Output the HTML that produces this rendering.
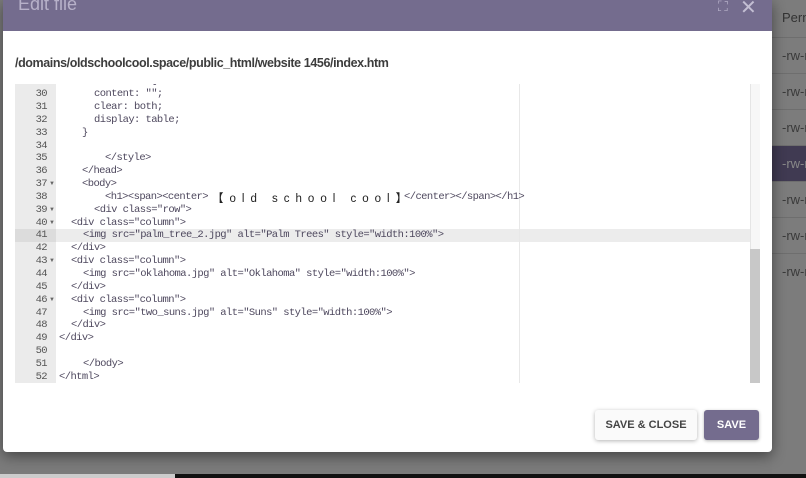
<!DOCTYPE html>
<html><head><meta charset="utf-8"><style>
*{margin:0;padding:0;box-sizing:border-box}
body{width:806px;height:478px;overflow:hidden;background:#7b7b7b;font-family:"Liberation Sans",sans-serif;position:relative}
.right{position:absolute;left:772px;top:0;width:34px;height:474px;background:#7c7c7c}
.row{position:absolute;left:0;width:34px;height:36px;border-top:1px solid #6e6e6e;color:#3a3a3a;font-size:13px;padding-left:10px;line-height:36px;white-space:nowrap;overflow:hidden}
.modal{position:absolute;left:3px;top:0;width:769px;height:452px;background:#fff;border-radius:0 0 4px 4px;box-shadow:0 4px 14px rgba(0,0,0,.45);overflow:hidden}
.hdr{position:absolute;left:0;top:0;width:769px;height:31px;background:#746c8e}
.hdr .t{position:absolute;left:15px;top:-6px;font-size:18px;color:#b7b1c9}
.path{position:absolute;left:12px;top:56px;font-size:12.5px;font-weight:bold;color:#3d3d3d;letter-spacing:-0.4px}
.ed{position:absolute;left:12px;top:84px;width:745px;height:299px;overflow:hidden;background:#fff}
.gut{position:absolute;left:0;top:0;width:41px;height:300px;background:#ebebeb}
.ln{position:absolute;left:0;width:32px;text-align:right;font:10.5px "Liberation Mono",monospace;letter-spacing:-0.6px;color:#555;height:13px;line-height:13px}
.ar{position:absolute;left:34px;font-size:6px;color:#666;line-height:13px}
.cl{position:absolute;font:10.5px "Liberation Mono",monospace;letter-spacing:-0.58px;color:#4e485e;white-space:pre;line-height:13px;height:13px}
.act{position:absolute;left:0;top:145px;width:738px;height:13px;background:#ececec}
.actg{position:absolute;left:0;top:145px;width:41px;height:13px;background:#dcdcdc}
.pm{position:absolute;left:504px;top:0;width:1px;height:300px;background:#e8e8e8}
.sb{position:absolute;left:735px;top:0;width:10px;height:300px;background:#f7f7f7;border-left:1px solid #e5e5e5}
.th{position:absolute;left:735px;top:165px;width:10px;height:134px;background:#c8c8c8}
.btn{position:absolute;top:410px;height:30px;border-radius:3px;font-size:11px;font-weight:bold;line-height:30px;text-align:center}
</style></head><body>
<div class="right">
<div style="position:absolute;left:10px;top:10px;font-size:13px;color:#333">Perm</div>
<div class="row" style="top:37px">-rw-r</div>
<div class="row" style="top:73px">-rw-r</div>
<div class="row" style="top:109px">-rw-r</div>
<div class="row" style="top:145px;background:#403a52;color:#888">-rw-r</div>
<div class="row" style="top:181px">-rw-r</div>
<div class="row" style="top:217px">-rw-r</div>
<div class="row" style="top:253px">-rw-r</div>
</div>
<div style="position:absolute;left:0;top:474px;width:806px;height:4px;background:#111"></div>
<div style="position:absolute;left:0;top:474px;width:175px;height:4px;background:#ccc"></div>
<div class="modal">
<div class="hdr"><div class="t">Edit file</div>
<div style="position:absolute;left:715px;top:-2px;color:#b7b1c9;font-size:14px">⛶</div>
<div style="position:absolute;left:737px;top:-5px;color:#c3bed3;font-size:20px">✕</div></div>
<div class="path">/domains/oldschoolcool.space/public_html/website 1456/index.htm</div>
<div class="ed">
<div class="gut"></div><div class="act"></div><div class="actg"></div><div class="pm"></div>
<div class="ln" style="top:-9px">29</div><div class="cl" style="top:-9px;left:67px">.row::after {</div>
<div class="ln" style="top:4px">30</div><div class="cl" style="top:4px;left:79px">content: "";</div>
<div class="ln" style="top:17px">31</div><div class="cl" style="top:17px;left:79px">clear: both;</div>
<div class="ln" style="top:30px">32</div><div class="cl" style="top:30px;left:79px">display: table;</div>
<div class="ln" style="top:43px">33</div><div class="cl" style="top:43px;left:67px">}</div>
<div class="ln" style="top:56px">34</div>
<div class="ln" style="top:68px">35</div><div class="cl" style="top:68px;left:90px">&lt;/style&gt;</div>
<div class="ln" style="top:81px">36</div><div class="cl" style="top:81px;left:67px">&lt;/head&gt;</div>
<div class="ln" style="top:94px">37</div><div class="ar" style="top:94px">▼</div><div class="cl" style="top:94px;left:67px">&lt;body&gt;</div>
<div class="ln" style="top:107px">38</div><div class="cl" style="top:107px;left:90px">&lt;h1&gt;&lt;span&gt;&lt;center&gt;</div>
<div class="cl" style="top:106px;left:197px;font:11.5px 'Liberation Sans','Noto Sans CJK JP',sans-serif;color:#222;letter-spacing:6px">【old school cool】</div>
<div class="cl" style="top:107px;left:389px">&lt;/center&gt;&lt;/span&gt;&lt;/h1&gt;</div>
<div class="ln" style="top:120px">39</div><div class="ar" style="top:120px">▼</div><div class="cl" style="top:120px;left:79px">&lt;div class="row"&gt;</div>
<div class="ln" style="top:133px">40</div><div class="ar" style="top:133px">▼</div><div class="cl" style="top:133px;left:56px">&lt;div class="column"&gt;</div>
<div class="ln" style="top:145px">41</div><div class="cl" style="top:145px;left:68px">&lt;img src="palm_tree_2.jpg" alt="Palm Trees" style="width:100%"&gt;</div>
<div class="ln" style="top:158px">42</div><div class="cl" style="top:158px;left:56px">&lt;/div&gt;</div>
<div class="ln" style="top:171px">43</div><div class="ar" style="top:171px">▼</div><div class="cl" style="top:171px;left:56px">&lt;div class="column"&gt;</div>
<div class="ln" style="top:184px">44</div><div class="cl" style="top:184px;left:68px">&lt;img src="oklahoma.jpg" alt="Oklahoma" style="width:100%"&gt;</div>
<div class="ln" style="top:197px">45</div><div class="cl" style="top:197px;left:56px">&lt;/div&gt;</div>
<div class="ln" style="top:210px">46</div><div class="ar" style="top:210px">▼</div><div class="cl" style="top:210px;left:56px">&lt;div class="column"&gt;</div>
<div class="ln" style="top:223px">47</div><div class="cl" style="top:223px;left:68px">&lt;img src="two_suns.jpg" alt="Suns" style="width:100%"&gt;</div>
<div class="ln" style="top:235px">48</div><div class="cl" style="top:235px;left:56px">&lt;/div&gt;</div>
<div class="ln" style="top:248px">49</div><div class="cl" style="top:248px;left:44px">&lt;/div&gt;</div>
<div class="ln" style="top:261px">50</div>
<div class="ln" style="top:274px">51</div><div class="cl" style="top:274px;left:68px">&lt;/body&gt;</div>
<div class="ln" style="top:287px">52</div><div class="cl" style="top:287px;left:44px">&lt;/html&gt;</div>
<div class="sb"></div><div class="th"></div>
</div>
<div class="btn" style="left:592px;width:102px;background:#fafafa;color:#444;box-shadow:0 1px 4px rgba(0,0,0,.3)">SAVE &amp; CLOSE</div>
<div class="btn" style="left:701px;width:55px;background:#746c8e;color:#fff;box-shadow:0 1px 3px rgba(0,0,0,.3)">SAVE</div>
</div>
</body></html>
